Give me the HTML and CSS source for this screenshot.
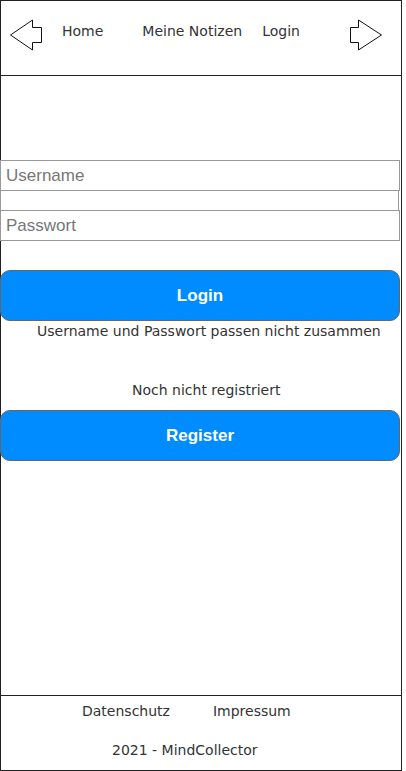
FILE: index.html
```html
<!DOCTYPE html>
<html lang="de">
<head>
<meta charset="utf-8">
<title>MindCollector - Login</title>
<link rel="stylesheet" href="styles.css">
</head>
<body>
<div class="frame">
  <header class="header">
    <svg class="arrow arrow-left" width="32" height="32" viewBox="0 0 32 32">
      <path d="M0.5 16 L22.5 1 L22.5 8.5 L31.5 8.5 L31.5 23.5 L22.5 23.5 L22.5 31 Z" fill="#fff" stroke="#111" stroke-width="1"/>
    </svg>
    <a class="nav nav-home">Home</a>
    <a class="nav nav-notes">Meine Notizen</a>
    <a class="nav nav-login">Login</a>
    <svg class="arrow arrow-right" width="32" height="32" viewBox="0 0 32 32">
      <path d="M31.5 16 L8.5 1 L8.5 8.5 L0.5 8.5 L0.5 23.5 L8.5 23.5 L8.5 31 Z" fill="#fff" stroke="#111" stroke-width="1"/>
    </svg>
  </header>
  <main class="main">
    <div class="fields">
      <div class="field">Username</div>
      <div class="field field-gap"></div>
      <div class="field">Passwort</div>
    </div>
    <button class="btn btn-login">Login</button>
    <p class="error">Username und Passwort passen nicht zusammen</p>
    <p class="hint">Noch nicht registriert</p>
    <button class="btn btn-register">Register</button>
  </main>
  <footer class="footer">
    <div class="footer-links">
      <a class="flink flink-ds">Datenschutz</a>
      <a class="flink flink-imp">Impressum</a>
    </div>
    <div class="copy">2021 - MindCollector</div>
  </footer>
</div>
</body>
</html>
```
FILE: styles.css
```css
* { box-sizing: border-box; }
html, body { margin: 0; padding: 0; background: #fff; }
body { font-family: "DejaVu Sans", Verdana, sans-serif; color: #333; }

.frame {
  width: 402px;
  height: 771px;
  border: 1px solid #222;
  display: flex;
  flex-direction: column;
}

.header {
  height: 75px;
  flex: 0 0 75px;
  border-bottom: 1px solid #222;
  display: flex;
  align-items: flex-start;
  padding-left: 9px;
}
.arrow { display: block; margin-top: 18px; flex: 0 0 auto; }
.nav {
  font-size: 14px;
  line-height: 17px;
  margin-top: 22px;
  color: #333;
  white-space: nowrap;
}
.nav-home { margin-left: 20px; }
.nav-notes { margin-left: 39px; }
.nav-login { margin-left: 20px; }
.arrow-right { margin-left: 50px; }

.main {
  flex: 1 1 auto;
  display: flex;
  flex-direction: column;
  padding-top: 84px;
}
.fields { display: flex; flex-direction: column; width: 400px; margin-left: -1px; }
.field {
  height: 31px;
  border: 1px solid #999;
  font-family: "Liberation Sans", Arial, sans-serif;
  font-size: 17px;
  line-height: 30px;
  color: #777;
  padding-left: 5px;
}
.field + .field { margin-top: -1px; }
.field-gap { height: 21px; width: 399px; }

.btn {
  display: block;
  width: 400px;
  margin-left: -1px;
  height: 51px;
  border: 1px solid #666;
  border-radius: 10px;
  background: #008cff;
  color: #fff;
  font-family: "Liberation Sans", Arial, sans-serif;
  font-weight: bold;
  font-size: 17px;
  padding: 0;
}
.btn-login { margin-top: 29px; }
.error {
  margin: 2px 0 0 36px;
  font-size: 14px;
  line-height: 17px;
  color: #333;
}
.hint {
  margin: 42px 0 0 131px;
  font-size: 14px;
  line-height: 17px;
  color: #333;
}
.btn-register { margin-top: 11px; }

.footer {
  flex: 0 0 75px;
  height: 75px;
  border-top: 1px solid #222;
  display: flex;
  flex-direction: column;
}
.footer-links {
  display: flex;
  padding-left: 81px;
  margin-top: 7px;
}
.flink { font-size: 14px; line-height: 17px; color: #333; }
.flink-imp { margin-left: 43px; }
.copy {
  font-size: 14px;
  line-height: 17px;
  margin: 22px 0 0 111px;
  color: #333;
}
```
